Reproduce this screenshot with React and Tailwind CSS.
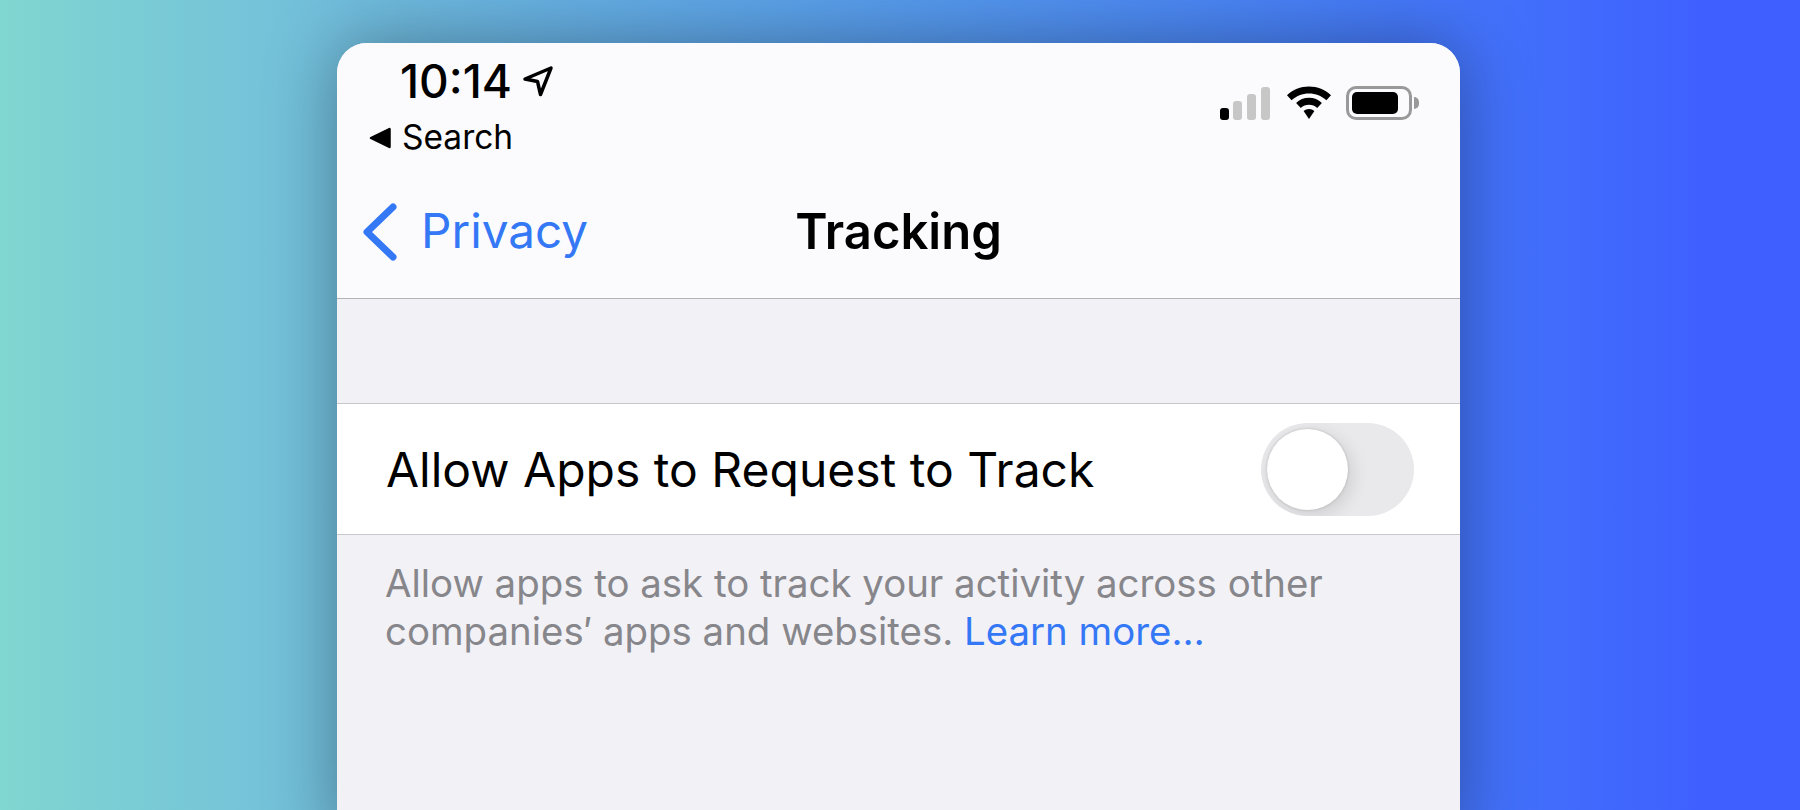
import React from 'react';

const font = { fontFamily: 'Inter, "Liberation Sans", sans-serif' };

const StatusIcons = () => (
  <div className="flex items-center">
    <svg width="52" height="34" viewBox="0 0 52 34" className="mr-[15px]">
      <rect x="1" y="22" width="9" height="12" rx="3" fill="#000" />
      <rect x="14" y="15" width="9" height="19" rx="3" fill="#c7c7c7" />
      <rect x="28" y="8" width="9" height="26" rx="3" fill="#c7c7c7" />
      <rect x="42" y="1" width="9" height="33" rx="3" fill="#c7c7c7" />
    </svg>
    <svg width="46" height="34" viewBox="0 0 46 34" className="mr-[14px]">
      <path d="M23 0.500C14.500 0.500 6.800 3.800 1 9.300L5.600 14.200C10.200 9.900 16.300 7.400 23 7.400C29.700 7.400 35.800 9.900 40.400 14.200L45 9.300C39.200 3.800 31.500 0.500 23 0.500Z" fill="#000" />
      <path d="M23 11.800C18 11.800 13.500 13.700 10.100 16.900L14.800 21.900C17 19.900 19.900 18.700 23 18.700C26.100 18.700 29 19.900 31.200 21.900L35.900 16.900C32.500 13.700 28 11.800 23 11.800Z" fill="#000" />
      <path d="M23 23C21 23 19.100 23.800 17.600 25.100L23 33L28.400 25.100C26.900 23.800 25 23 23 23Z" fill="#000" />
    </svg>
    <div className="flex items-center">
      <div className="w-[66px] h-[34px] rounded-[10px] border-[3px] border-[#999] p-[3px]">
        <div className="w-[46px] h-full rounded-[5px] bg-black" />
      </div>
      <div className="w-[5px] h-[12px] rounded-r-full bg-[#999] ml-[2px]" />
    </div>
  </div>
);

const App = () => {
  return (
    <div className="w-[1800px] h-[810px] overflow-hidden bg-gradient-to-r from-[#80d6d0] via-[#72bedb] via-[18%] to-[#3f5fff] to-[95%] flex pl-[337px] pt-[43px]" style={font}>
      <div className="w-[1123px] h-[800px] shrink-0 rounded-t-[30px] bg-[#f2f1f6] shadow-[0_0_70px_rgba(0,0,0,0.35)] overflow-hidden">
        {/* header */}
        <div className="h-[256px] bg-[#fbfbfd] border-b border-[#b4b4b6] flex flex-col">
          <div className="h-[122px] flex justify-between">
            <div className="pl-[32px] pt-[18px]">
              <div className="flex items-center pl-[31px] h-[40px]">
                <span className="text-[46px] leading-none font-medium text-black">10:14</span>
                <svg width="32" height="32" viewBox="0 0 32 32" className="ml-[10px]">
                  <path d="M29 3L3 14L15.500 16.500L18.500 29.500Z" fill="none" stroke="#000" strokeWidth="3.500" strokeLinejoin="round" />
                </svg>
              </div>
              <div className="flex items-center mt-[20px]">
                <svg width="22" height="22" viewBox="0 0 22 22">
                  <path d="M20.500 2V20L2 11Z" fill="#000" stroke="#000" strokeWidth="2.500" strokeLinejoin="round" />
                </svg>
                <span className="ml-[11px] text-[33.500px] leading-none text-black">Search</span>
              </div>
            </div>
            <div className="pr-[41px] pt-[43px]">
              <StatusIcons />
            </div>
          </div>
          <div className="relative flex-1 flex items-center justify-center">
            <div className="absolute left-[26px] inset-y-0 flex items-center">
              <svg width="34" height="58" viewBox="0 0 34 58">
                <path d="M30 4L4 29L30 54" fill="none" stroke="#3478f6" strokeWidth="7" strokeLinecap="round" strokeLinejoin="round" />
              </svg>
              <span className="ml-[24px] text-[47.700px] leading-none text-[#3478f6]">Privacy</span>
            </div>
            <span className="text-[49px] font-semibold leading-none text-black">Tracking</span>
          </div>
        </div>

        {/* toggle row */}
        <div className="mt-[104px] h-[132px] bg-white border-y border-[#c8c7cc] flex items-center justify-between pl-[49px] pr-[46px]">
          <span className="text-[48px] leading-none text-black pt-[2px]">Allow Apps to Request to Track</span>
          <div className="w-[153px] h-[93px] rounded-full bg-[#e9e9eb] p-[6px] overflow-hidden">
            <div className="w-[81px] h-[81px] rounded-full bg-white shadow-[4px_5px_18px_rgba(0,0,0,0.12),0_0_3px_rgba(0,0,0,0.18)]" />
          </div>
        </div>

        {/* footer text */}
        <p className="pl-[48px] pt-[24px] text-[38.400px] leading-[48px] text-[#86868b]">
          Allow apps to ask to track your activity across other<br />
          companies′ apps and websites. <span className="text-[#3478f6]">Learn more…</span>
        </p>
      </div>
    </div>
  );
};

export default App;
